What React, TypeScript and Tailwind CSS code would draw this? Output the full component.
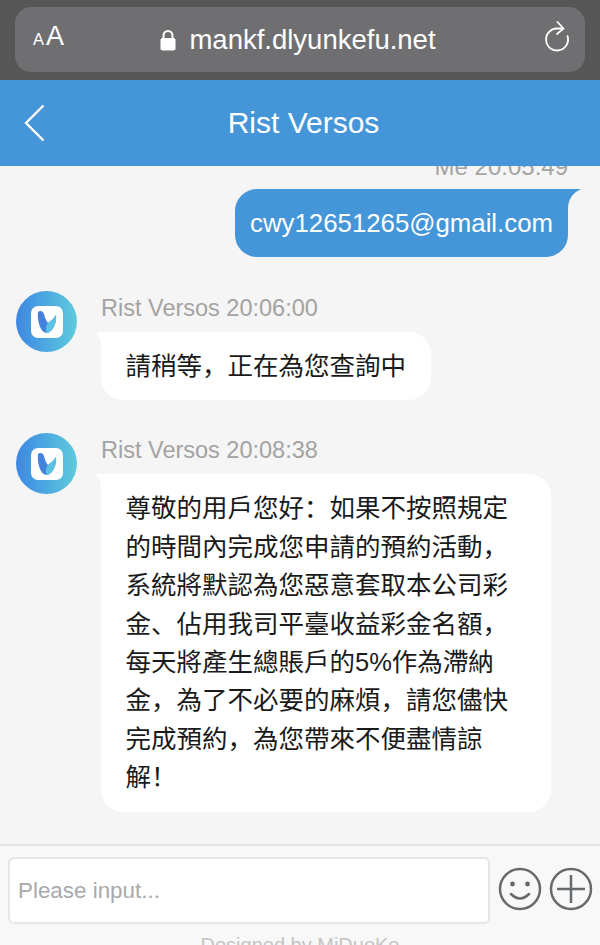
import React from "react";

const sans = "font-['Liberation_Sans','Noto_Sans_CJK_SC',sans-serif]";

function Avatar() {
  return (
    <div className="flex h-[61px] w-[61px] shrink-0 items-center justify-center rounded-full bg-gradient-to-r from-[#3f87e2] to-[#5fcbdc]">
      <div className="flex h-[32px] w-[32px] items-center justify-center rounded-[7px] bg-white">
        <svg width="20" height="24" viewBox="0 0 20 24">
          <path d="M1 2 C3 0 6 1 7 4 C8 8 9 11 11 13 C14 11 17 8 19 5 C20 12 16 22 10 23 C4 23 0 12 1 2 Z" fill="#4383dc" />
          <path d="M11 13 C14 11 17 8 19 5 C20 12 16 22 10 23 C8 20 9 15 11 13 Z" fill="#5cc2e2" />
        </svg>
      </div>
    </div>
  );
}

function Notch({ side, color }: { side: "left" | "right"; color: string }) {
  return side === "right" ? (
    <svg className="absolute right-[-13px] top-0" width="14" height="20" viewBox="0 0 14 20">
      <path d="M0 0 H14 Q1 6 1 20 H0 Z" fill={color} />
    </svg>
  ) : (
    <svg className="absolute left-[-7px] top-0" width="8" height="14" viewBox="0 0 8 14">
      <path d="M8 0 H0 Q7 3 7 14 H8 Z" fill={color} />
    </svg>
  );
}

function Incoming({ time, width, children }: { time: string; width: string; children: React.ReactNode }) {
  return (
    <div className="flex pl-[16px]">
      <Avatar />
      <div className="ml-[24px] flex flex-col items-start">
        <div className="h-[30px] whitespace-nowrap text-[23.5px] leading-[34px] text-[#a3a3a3]">{`Rist Versos ${time}`}</div>
        <div className={`relative mt-[11px] rounded-[22px] rounded-tl-none bg-white px-[24.5px] py-[15px] text-[25.5px] leading-[38.4px] text-[#1a1a1a] ${width}`}>
          <Notch side="left" color="#ffffff" />
          {children}
        </div>
      </div>
    </div>
  );
}

export default function App() {
  return (
    <div className={`flex h-[945px] w-[600px] flex-col overflow-hidden bg-[#f5f5f5] ${sans}`}>
      {/* Browser bar */}
      <div className="h-[80px] shrink-0 bg-[#565656] px-[15px] pt-[7px]">
        <div className="relative flex h-[65px] items-center justify-center rounded-[16px] bg-[#6f6f71] text-white">
          <span className="absolute left-[18px] top-[16px] flex items-baseline gap-[2px] leading-none">
            <span className="text-[16.5px]">A</span>
            <span className="text-[27px]">A</span>
          </span>
          <svg className="mr-[13px] ml-[-4px]" width="16" height="22" viewBox="0 0 16 22">
            <path d="M3.5 10 V6.5 a4.5 4.5 0 0 1 9 0 V10" fill="none" stroke="#fff" strokeWidth="2" />
            <rect x="0.5" y="9" width="15" height="12.5" rx="2" fill="#fff" />
          </svg>
          <span className="text-[27.5px] leading-none">mankf.dlyunkefu.net</span>
          <svg className="absolute right-[14px] top-[14px]" width="27" height="32" viewBox="0 0 27 32">
            <path d="M19 7.5 H13 A11 11 0 1 0 23.5 15" fill="none" stroke="#fff" strokeWidth="1.8" strokeLinecap="round" />
            <path d="M13.5 1 L19.5 7.5 L13 13" fill="none" stroke="#fff" strokeWidth="1.8" strokeLinecap="round" strokeLinejoin="round" />
          </svg>
        </div>
      </div>

      {/* Header */}
      <div className="relative flex h-[86px] shrink-0 items-center justify-center bg-[#4496d8] pl-[7px] text-white">
        <svg className="absolute left-[24px] top-[24px]" width="22" height="38" viewBox="0 0 22 38">
          <path d="M19.5 1.5 L2 19 L19.5 36.5" fill="none" stroke="#fff" strokeWidth="2.4" />
        </svg>
        <span className="text-[30px] leading-none">Rist Versos</span>
      </div>

      {/* Messages */}
      <div className="flex min-h-0 flex-1 flex-col overflow-hidden">
        <div className="-mt-[15px] mb-[34px] flex flex-col items-end pr-[32px]">
          <div className="h-[30px] text-[24px] leading-[32px] text-[#a3a3a3]">Me 20:05:49</div>
          <div className="relative mt-[8px] h-[68px] rounded-[22px] rounded-tr-none bg-[#4496d8] px-[15px] py-[15px] text-[25.8px] leading-[38px] text-white">
            <Notch side="right" color="#4496d8" />
            cwy12651265@gmail.com
          </div>
        </div>

        <div className="mb-[33px]">
          <Incoming time="20:06:00" width="w-[330px] whitespace-nowrap">請稍等，正在為您查詢中</Incoming>
        </div>

        <Incoming time="20:08:38" width="w-[450px]">
          尊敬的用戶您好：如果不按照規定的時間內完成您申請的預約活動，系統將默認為您惡意套取本公司彩金、佔用我司平臺收益彩金名額，每天將產生總賬戶的5%作為滯納金，為了不必要的麻煩，請您儘快完成預約，為您帶來不便盡情諒解！
        </Incoming>
      </div>

      {/* Footer */}
      <div className="h-[101px] shrink-0 border-t-2 border-[#e4e4e4] bg-[#f8f8f8]">
        <div className="flex items-start pl-[8px] pt-[11px]">
          <input
            readOnly
            placeholder="Please input..."
            className="h-[67px] w-[482px] rounded-[6px] border-2 border-[#e6e6e6] bg-white px-[8px] text-[22.4px] outline-none placeholder:text-[#a9a9a9]"
          />
          <svg className="ml-[8px] mt-[10px]" width="44" height="44" viewBox="0 0 44 44">
            <circle cx="22" cy="22" r="20" fill="none" stroke="#666a6c" strokeWidth="2.5" />
            <circle cx="14.5" cy="17" r="2.4" fill="#666a6c" />
            <circle cx="29.5" cy="17" r="2.4" fill="#666a6c" />
            <path d="M13 27 Q22 36 31 27" fill="none" stroke="#666a6c" strokeWidth="2.5" strokeLinecap="round" />
          </svg>
          <svg className="ml-[7px] mt-[10px]" width="44" height="44" viewBox="0 0 44 44">
            <circle cx="22" cy="22" r="20" fill="none" stroke="#666a6c" strokeWidth="2.5" />
            <path d="M8 22 H36 M22 8 V36" fill="none" stroke="#666a6c" strokeWidth="2.5" />
          </svg>
        </div>
        <div className="mt-[9px] text-center text-[20px] leading-[24px] text-[#c4c4c4]">Designed by MiDuoKe</div>
      </div>
    </div>
  );
}
